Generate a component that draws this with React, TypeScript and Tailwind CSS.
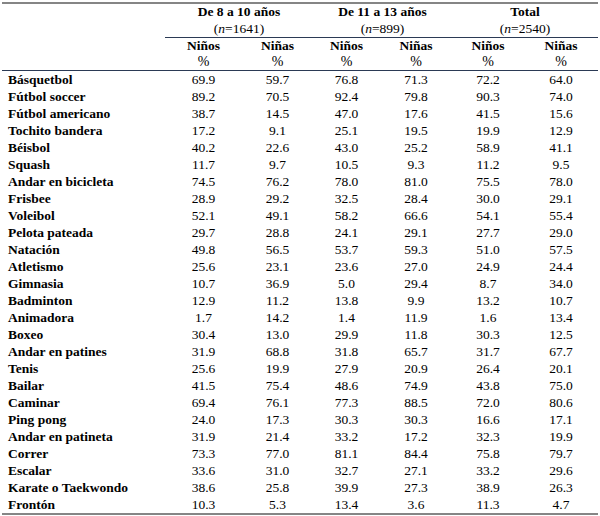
const rows: [string, string, string, string, string, string, string][] = [
  ["Básquetbol", "69.9", "59.7", "76.8", "71.3", "72.2", "64.0"],
  ["Fútbol soccer", "89.2", "70.5", "92.4", "79.8", "90.3", "74.0"],
  ["Fútbol americano", "38.7", "14.5", "47.0", "17.6", "41.5", "15.6"],
  ["Tochito bandera", "17.2", "9.1", "25.1", "19.5", "19.9", "12.9"],
  ["Béisbol", "40.2", "22.6", "43.0", "25.2", "58.9", "41.1"],
  ["Squash", "11.7", "9.7", "10.5", "9.3", "11.2", "9.5"],
  ["Andar en bicicleta", "74.5", "76.2", "78.0", "81.0", "75.5", "78.0"],
  ["Frisbee", "28.9", "29.2", "32.5", "28.4", "30.0", "29.1"],
  ["Voleibol", "52.1", "49.1", "58.2", "66.6", "54.1", "55.4"],
  ["Pelota pateada", "29.7", "28.8", "24.1", "29.1", "27.7", "29.0"],
  ["Natación", "49.8", "56.5", "53.7", "59.3", "51.0", "57.5"],
  ["Atletismo", "25.6", "23.1", "23.6", "27.0", "24.9", "24.4"],
  ["Gimnasia", "10.7", "36.9", "5.0", "29.4", "8.7", "34.0"],
  ["Badminton", "12.9", "11.2", "13.8", "9.9", "13.2", "10.7"],
  ["Animadora", "1.7", "14.2", "1.4", "11.9", "1.6", "13.4"],
  ["Boxeo", "30.4", "13.0", "29.9", "11.8", "30.3", "12.5"],
  ["Andar en patines", "31.9", "68.8", "31.8", "65.7", "31.7", "67.7"],
  ["Tenis", "25.6", "19.9", "27.9", "20.9", "26.4", "20.1"],
  ["Bailar", "41.5", "75.4", "48.6", "74.9", "43.8", "75.0"],
  ["Caminar", "69.4", "76.1", "77.3", "88.5", "72.0", "80.6"],
  ["Ping pong", "24.0", "17.3", "30.3", "30.3", "16.6", "17.1"],
  ["Andar en patineta", "31.9", "21.4", "33.2", "17.2", "32.3", "19.9"],
  ["Correr", "73.3", "77.0", "81.1", "84.4", "75.8", "79.7"],
  ["Escalar", "33.6", "31.0", "32.7", "27.1", "33.2", "29.6"],
  ["Karate o Taekwondo", "38.6", "25.8", "39.9", "27.3", "38.9", "26.3"],
  ["Frontón", "10.3", "5.3", "13.4", "3.6", "11.3", "4.7"],
];

// column widths for the six value columns
const colW = ["w-[77px]", "w-[71px]", "w-[67px]", "w-[72px]", "w-[72px]", "w-[74px]"];

const groups = [
  { title: "De 8 a 10 años", n: "1641", w: "w-[148px]", cols: [0, 1] },
  { title: "De 11 a 13 años", n: "899", w: "w-[139px]", cols: [2, 3] },
  { title: "Total", n: "2540", w: "w-[146px]", cols: [4, 5] },
];

export default function App() {
  return (
    <div
      className="min-h-[516px] bg-white pl-[2px] pt-[2px] text-[13.5px] text-black"
      style={{ fontFamily: '"Liberation Serif", "Times New Roman", serif' }}
    >
      <div className="w-[596px] border-t-2 border-b-2 border-[#858585]">
        {/* Header */}
        <div className="flex border-b border-[#2b3a55]">
          <div className="w-[163px]" />
          {groups.map((g) => (
            <div key={g.title} className={`${g.w} flex flex-col`}>
              <div className="border-b border-[#2b3a55]">
                <div className="flex h-[16px] items-center justify-center font-bold leading-none">
                  {g.title}
                </div>
                <div className="flex h-[17px] items-center justify-center leading-none">
                  (<i>n</i>={g.n})
                </div>
              </div>
              <div className="flex">
                {g.cols.map((c, i) => (
                  <div key={c} className={`${colW[c]} flex flex-col items-center`}>
                    <div className="flex h-[16px] items-center font-bold leading-none">
                      {i === 0 ? "Niños" : "Niñas"}
                    </div>
                    <div className="flex h-[16px] items-center text-[14px] leading-none">%</div>
                  </div>
                ))}
              </div>
            </div>
          ))}
        </div>

        {/* Body */}
        <div className="flex flex-col">
          {rows.map(([label, ...vals]) => (
            <div key={label} className="flex h-[17px] items-center leading-none">
              <div className="w-[163px] pl-[6px] font-bold">{label}</div>
              {vals.map((v, i) => (
                <div key={i} className={`${colW[i]} text-center`}>
                  {v}
                </div>
              ))}
            </div>
          ))}
        </div>
      </div>
    </div>
  );
}
